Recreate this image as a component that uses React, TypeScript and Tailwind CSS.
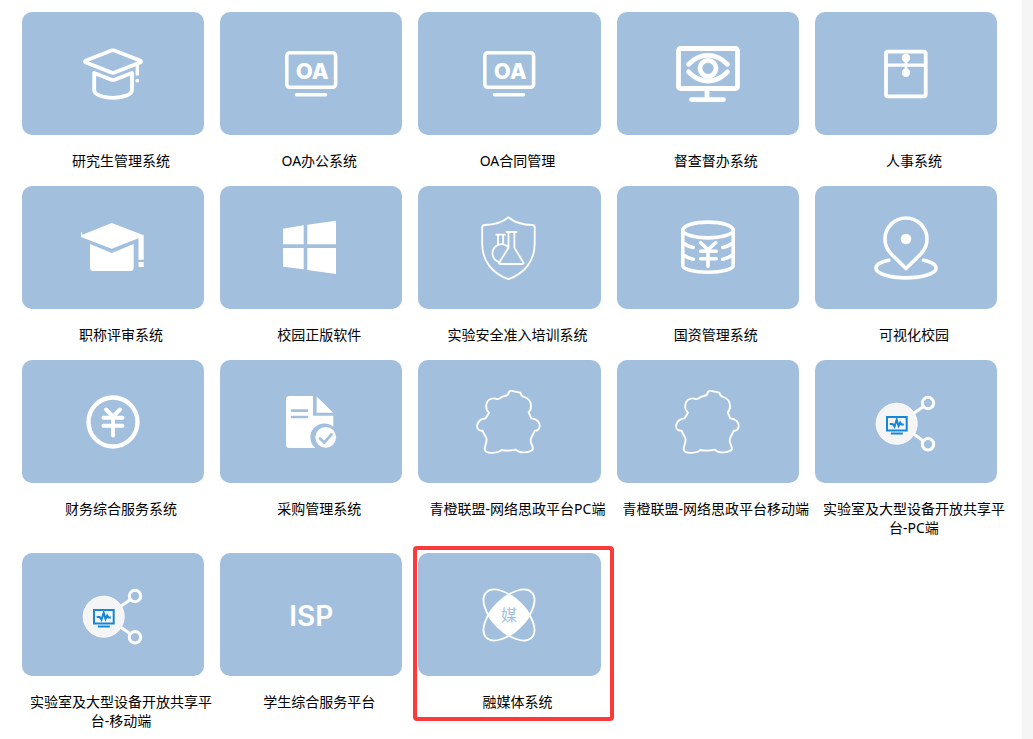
import React from 'react';

const TILE = '#a2c0de';

const GraduateIcon = () => (
  <svg viewBox="0 0 64 64" className="size-16" fill="none" stroke="#fff" strokeWidth="3.8" strokeLinecap="round" strokeLinejoin="round">
    <path d="M30.5 8.6 5 18.4q-2.2 1.1 0 2.2l25.5 10q1.5.6 3 0l25.5-10q2.2-1.1 0-2.2L33.5 8.6q-1.5-.6-3 0Z" />
    <path d="M13.2 31v17c0 4.5 8 7.800 18.800 7.800S51 52.500 51 48V31l-17.500 6.700q-1.500.5-3 0Z" />
    <path d="M56.300 23v10.500" strokeWidth="3.400" strokeLinecap="butt" />
    <circle cx="56.300" cy="38.700" r="1.900" fill="#fff" stroke="none" />
  </svg>
);

const OaIcon = () => (
  <svg viewBox="0 0 64 64" className="size-16" fill="none" stroke="#fff" strokeWidth="3.6" strokeLinecap="round">
    <rect x="7.800" y="10.800" width="48.800" height="34.500" rx="3" />
    <path d="M17.500 52.700h29" />
    <text x="33.200" y="36.500" textAnchor="middle" fontSize="22" fontWeight="800" fill="#fff" stroke="none" className="font-[family-name:Inter]">OA</text>
  </svg>
);

const SuperviseIcon = () => (
  <svg viewBox="0 0 64 64" className="size-16" fill="none" stroke="#fff" strokeWidth="4.8" strokeLinecap="round">
    <rect x="2.500" y="6.500" width="59" height="40" rx="2" />
    <path d="M31 48v9M15.500 57.600h32" />
    <path d="M12.500 22.300C24 10.300 40 10.300 51.500 22.300M12.500 29.900C24 42 40 42 51.500 29.900" />
    <circle cx="32" cy="26.300" r="8" />
  </svg>
);

const PersonnelIcon = () => (
  <svg viewBox="0 0 64 64" className="size-16" fill="none" stroke="#fff" strokeWidth="3.8">
    <rect x="12" y="9.700" width="39.700" height="44.600" rx="2" />
    <path d="M12 23.200h39.700" strokeWidth="3.300" />
    <path d="M32 16v15" strokeWidth="2.500" />
    <circle cx="32" cy="16" r="4.200" fill="#fff" stroke="none" />
    <circle cx="32" cy="30.700" r="4.200" fill="#fff" stroke="none" />
  </svg>
);

const TitleReviewIcon = () => (
  <svg viewBox="0 0 64 64" className="size-16" fill="#fff">
    <path d="M0 16h.8v3L30.700 7l32 12.300v24.400h-5.200V22.200L30.700 32.700 0 21Z" />
    <path d="M9 28l21.700 9 22-9v23.500q0 3.500-3.500 3.500H12.500Q9 55 9 51.500Z" />
    <path d="M57.500 46h5.200v5h-5.200z" />
  </svg>
);

const WindowsIcon = () => (
  <svg viewBox="0 0 64 64" className="size-16" fill="#fff">
    <path d="M4 12.700 24.700 9.300v19H4ZM28.300 8.700 57 4.800v23.500H28.300ZM4 32h20.700v21.300L4 50.700ZM28.300 32H57v26L28.300 54Z" />
  </svg>
);

const LabSafetyIcon = () => (
  <svg viewBox="0 0 64 64" className="size-16" fill="none" stroke="#fff" strokeWidth="1.8" strokeLinecap="round" strokeLinejoin="round">
    <path d="M31.400 1.300C26 6 18 8.800 7.500 9Q5.200 9.100 5.200 11.500V28c0 17 10.300 29.500 26.200 35.200C47.300 57.500 57.700 45 57.700 28V11.500Q57.700 9.100 55.400 9C45 8.800 37 6 31.400 1.300Z" />
    <path d="M29.500 16h10M31.500 16v15.700L22.300 46.500q-.8 1.500 1 1.500h22q1.800 0 1-1.500L37.400 31.700V16" />
    <path d="M19.300 18.700h8.500M21 18.700v9.600M26.200 18.700v9.600M30.500 30.500A9 9 0 1 0 22.500 46" />
  </svg>
);

const AssetsIcon = () => (
  <svg viewBox="0 0 64 64" className="size-16" fill="none" stroke="#fff" strokeWidth="3.6" strokeLinecap="round" strokeLinejoin="round">
    <ellipse cx="32" cy="14" rx="25.200" ry="7.900" />
    <path d="M6.800 14v35.500c0 3.800 11 6.700 25.200 6.700s25.200-2.900 25.200-6.700V14" />
    <path d="M8 27.500q4 3 9.200 4M8 39.300q4 3 9.200 4M56 27.500q-4 3-9.200 4M56 39.300q-4 3-9.200 4" />
    <path d="m24.700 26.700 7.300 7 7.600-7M32 34v16.500M24.700 35.200h15.500M24.700 42.700h15.500" />
  </svg>
);

const CampusMapIcon = () => (
  <svg viewBox="0 0 64 64" className="size-16" fill="none" stroke="#fff" strokeWidth="3.6" strokeLinecap="round" strokeLinejoin="round">
    <path d="M32 52.500 17 37.700A21 21 0 1 1 47 37.700Z" />
    <path d="M14.800 44.300C7 45.800 2 48.800 2 52.300c0 5.300 13.400 9.600 30 9.600s30-4.300 30-9.600c0-3.500-5-6.500-12.500-8" />
    <circle cx="32" cy="23" r="5.300" fill="#fff" stroke="none" />
  </svg>
);

const FinanceIcon = () => (
  <svg viewBox="0 0 64 64" className="size-16" fill="none" stroke="#fff" strokeWidth="4" strokeLinecap="round" strokeLinejoin="round">
    <circle cx="32" cy="32" r="24.500" strokeWidth="4.300" />
    <path d="m25 19.500 7 7 7-7M32 26.500v19M22.500 27.700h19M22.500 35.700h19" />
  </svg>
);

const PurchaseIcon = () => (
  <svg viewBox="0 0 64 64" className="size-16" fill="#fff">
    <path d="M10.500 6H34v19.700h20.300v11a13.700 13.700 0 0 0-18 21.300H10.500Q7 58 7 54.500v-45Q7 6 10.500 6Z" />
    <path d="M37.700 6.500v16.200h16.500Z" />
    <circle cx="46.700" cy="47.300" r="10.400" />
    <path d="M13 20.700h15M13 27h15M41 48.500l4.300 4 7.200-8.200" fill="none" stroke={TILE} strokeWidth="2.700" strokeLinecap="round" strokeLinejoin="round" />
  </svg>
);

const OrangeIcon = () => (
  <svg viewBox="38 30 192 192" className="size-16 overflow-visible" fill="none" stroke="#fff" strokeWidth="5.5" strokeLinejoin="round">
    <path d="M134 36 138 32 168 38C170 46 174 49 180 51 194 56 200 66 200 78 200 87 198 93 193 97L201 115C217 116 227 127 226 139 225 148 219 153 211 152 208 162 200 170 199 180 198 190 206 198 206 207 201 217 166 223 155 209Q132 214 111 210C104 219 64 224 61 208 61 198 67 190 67 178 66 170 57 162 55 152 44 153 38 148 38 137 40 125 50 115 64 115L74 98C62 88 60 55 90 55 95 55 97 59 102 57 110 54 114 48 122 48 130 47 133 42 134 36Z" />
  </svg>
);

const SharingIcon = () => (
  <svg viewBox="0 0 64 64" className="size-16" fill="none" stroke="#fff" strokeWidth="3">
    <path d="m39.500 23.500 10-7M39.500 44l10 7" />
    <circle cx="54" cy="13" r="5.700" />
    <circle cx="54" cy="54.300" r="5.700" />
    <circle cx="22.700" cy="33.700" r="20.500" fill="#f5f5f5" strokeWidth="1" />
    <g stroke="#1487da" strokeWidth="2">
      <rect x="13" y="27" width="19.700" height="13.500" />
      <path d="M16.800 43.500h12" />
      <path d="M15.700 34h3l1.800 2.700 2.200-7 1.800 6.300 1.700-3.500 1.300 2h2.300" />
    </g>
  </svg>
);

const IspIcon = () => (
  <svg viewBox="0 0 64 64" className="size-16" fill="#fff">
    <text x="32.300" y="43" textAnchor="middle" fontSize="28" fontWeight="600" className="font-[family-name:Inter]">ISP</text>
  </svg>
);

const MediaIcon = () => (
  <svg viewBox="-32 -32 64 64" className="size-16" fill="none" stroke="#fff" strokeWidth="1.8">
    <ellipse rx="32.100" ry="16.400" transform="rotate(45)" />
    <ellipse rx="32.100" ry="16.400" transform="rotate(-45)" />
    <path fill="#fff" stroke="none" d="M0-20.700Q12-13 20.700 0 12 13 0 20.700-12 13-20.700 0-12-13 0-20.700Z" />
    <text y="6" textAnchor="middle" fontSize="16" fill={TILE} stroke="none">媒</text>
  </svg>
);

interface System {
  name: string;
  icon: React.FC;
  highlighted?: boolean;
}

const systems: System[] = [
  { name: '研究生管理系统', icon: GraduateIcon },
  { name: 'OA办公系统', icon: OaIcon },
  { name: 'OA合同管理', icon: OaIcon },
  { name: '督查督办系统', icon: SuperviseIcon },
  { name: '人事系统', icon: PersonnelIcon },
  { name: '职称评审系统', icon: TitleReviewIcon },
  { name: '校园正版软件', icon: WindowsIcon },
  { name: '实验安全准入培训系统', icon: LabSafetyIcon },
  { name: '国资管理系统', icon: AssetsIcon },
  { name: '可视化校园', icon: CampusMapIcon },
  { name: '财务综合服务系统', icon: FinanceIcon },
  { name: '采购管理系统', icon: PurchaseIcon },
  { name: '青橙联盟-网络思政平台PC端', icon: OrangeIcon },
  { name: '青橙联盟-网络思政平台移动端', icon: OrangeIcon },
  { name: '实验室及大型设备开放共享平台-PC端', icon: SharingIcon },
  { name: '实验室及大型设备开放共享平台-移动端', icon: SharingIcon },
  { name: '学生综合服务平台', icon: IspIcon },
  { name: '融媒体系统', icon: MediaIcon, highlighted: true },
];

const SystemLink: React.FC<{ system: System }> = ({ system }) => {
  const Icon = system.icon;

  return (
    <a href="#" className="relative flex flex-col gap-4">
      <span className="mr-4 flex justify-center rounded-[10px] bg-[#a2c0de] pt-[30px] pb-[29px]">
        <Icon />
      </span>
      <span className="px-1 text-center text-sm leading-[19px]">{system.name}</span>
      {system.highlighted && (
        <span className="pointer-events-none absolute -top-[7px] right-[3px] -bottom-[10px] -left-[5px] rounded border-4 border-[#fd3a3a]" />
      )}
    </a>
  );
};

const App: React.FC = () => {
  return (
    <div className="min-h-screen bg-[#f5f5f5] pr-[11px] font-['Noto_Sans','Noto_Sans_CJK_SC',sans-serif] text-black">
      <main className="min-h-screen bg-white pt-3 pr-[9px] pl-[22px]">
        <div className="grid grid-cols-5 items-start gap-y-4">
          {systems.map((system) => (
            <SystemLink key={system.name} system={system} />
          ))}
        </div>
      </main>
    </div>
  );
};

export default App;
